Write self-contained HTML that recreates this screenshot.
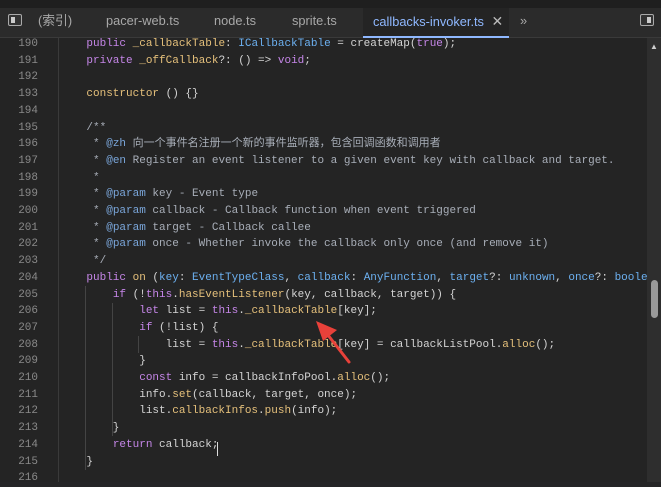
<!DOCTYPE html>
<html><head><meta charset="utf-8"><style>
*{margin:0;padding:0;box-sizing:border-box}
body{width:661px;height:482px;background:#252526;overflow:hidden;position:relative;font-family:"Liberation Sans","Noto Sans CJK SC",sans-serif}
#top{position:absolute;left:0;top:0;width:661px;height:8px;background:#1f1f1f}
#tabs{position:absolute;left:0;top:8px;width:661px;height:30px;background:#2b2b2b;border-bottom:1px solid #3a3a3a}
.tab{position:absolute;top:0;height:30px;line-height:26px;color:#a8a8a8;font-size:12.8px}
.act{background:#242424;color:#8fb8ff;border-bottom:2px solid #8fb8ff;height:30px}
#ed{position:absolute;left:0;top:38px;width:647px;height:444px;background:#242424}
#sb{position:absolute;left:647px;top:38px;width:14px;height:444px;background:#2e2e2e}
.ln{position:absolute;left:0;width:38px;text-align:right;color:#8a8a8a;font:11px/16.7px "Liberation Mono",monospace}
.cd{position:absolute;left:60px;white-space:pre;color:#d4d4d4;font:11px/16.7px "Liberation Mono","Noto Sans CJK SC",monospace}
.k{color:#c586e8}.y{color:#e5c07b}.b{color:#6cb0f0}.c{color:#a8aeb8}.cb{color:#7aa6da}
.g{position:absolute;width:1px;background:#444}
</style></head><body>
<div id="top"></div>
<div id="tabs">
<div style="position:absolute;left:8px;top:6px;width:14px;height:12px;border:1px solid #aaa;border-radius:2px;background:#333"><div style="position:absolute;left:2px;top:2px;width:4px;height:6px;background:#ccc"></div></div>
<div class="tab" style="left:38px">(索引)</div>
<div class="tab" style="left:106px">pacer-web.ts</div>
<div class="tab" style="left:214px">node.ts</div>
<div class="tab" style="left:292px">sprite.ts</div>
<div class="tab act" style="left:363px;width:146px;padding-left:10px">callbacks-invoker.ts <span style="color:#bbb;font-size:14px;margin-left:4px">✕</span></div>
<div class="tab" style="left:520px;color:#aaa">»</div>
<div style="position:absolute;left:640px;top:6px;width:14px;height:12px;border:1px solid #aaa;border-radius:2px;background:#333"><div style="position:absolute;right:2px;top:2px;width:4px;height:6px;background:#ccc"></div></div>
</div>
<div id="ed"></div>
<div style="position:absolute;left:58px;top:38px;width:1px;height:444px;background:#3a3a3a"></div>
<div id="sb"><div style="position:absolute;left:3px;top:4px;color:#ccc;font-size:8px">▲</div><div style="position:absolute;left:4px;top:242px;width:7px;height:38px;background:#9a9a9a;border-radius:4px"></div></div>
<div class="ln" style="top:36px">190<br>191<br>192<br>193<br>194<br>195<br>196<br>197<br>198<br>199<br>200<br>201<br>202<br>203<br>204<br>205<br>206<br>207<br>208<br>209<br>210<br>211<br>212<br>213<br>214<br>215<br>216</div>
<div class="g" style="left:85px;top:286px;height:184px"></div>
<div class="g" style="left:112px;top:303px;height:133px"></div>
<div class="g" style="left:138px;top:336px;height:17px"></div>
<div class="cd" style="top:36px">    <span class="k">public</span> <span class="y">_callbackTable</span>: <span class="b">ICallbackTable</span> = createMap(<span class="k">true</span>);
    <span class="k">private</span> <span class="y">_offCallback</span>?: () =&gt; <span class="k">void</span>;

    <span class="y">constructor</span> () {}

<span class="c">    /**
     * <span class="cb">@zh</span> 向一个事件名注册一个新的事件监听器，包含回调函数和调用者
     * <span class="cb">@en</span> Register an event listener to a given event key with callback and target.
     *
     * <span class="cb">@param</span> key - Event type
     * <span class="cb">@param</span> callback - Callback function when event triggered
     * <span class="cb">@param</span> target - Callback callee
     * <span class="cb">@param</span> once - Whether invoke the callback only once (and remove it)
     */</span>
    <span class="k">public</span> <span class="y">on</span> (<span class="b">key</span>: <span class="b">EventTypeClass</span>, <span class="b">callback</span>: <span class="b">AnyFunction</span>, <span class="b">target</span>?: <span class="b">unknown</span>, <span class="b">once</span>?: <span class="b">boole</span>
        <span class="k">if</span> (!<span class="k">this</span>.<span class="y">hasEventListener</span>(key, callback, target)) {
            <span class="k">let</span> list = <span class="k">this</span>.<span class="y">_callbackTable</span>[key];
            <span class="k">if</span> (!list) {
                list = <span class="k">this</span>.<span class="y">_callbackTable</span>[key] = callbackListPool.<span class="y">alloc</span>();
            }
            <span class="k">const</span> info = callbackInfoPool.<span class="y">alloc</span>();
            info.<span class="y">set</span>(callback, target, once);
            list.<span class="y">callbackInfos</span>.<span class="y">push</span>(info);
        }
        <span class="k">return</span> callback;
    }
</div>
<div style="position:absolute;left:217px;top:442px;width:1px;height:14px;background:#ddd"></div>
<svg style="position:absolute;left:0;top:0" width="661" height="482"><line x1="349" y1="362" x2="324" y2="330" stroke="#e8413a" stroke-width="3" stroke-linecap="round"/><polygon points="316,321 337,330 323,341" fill="#e8413a"/></svg>
</body></html>
